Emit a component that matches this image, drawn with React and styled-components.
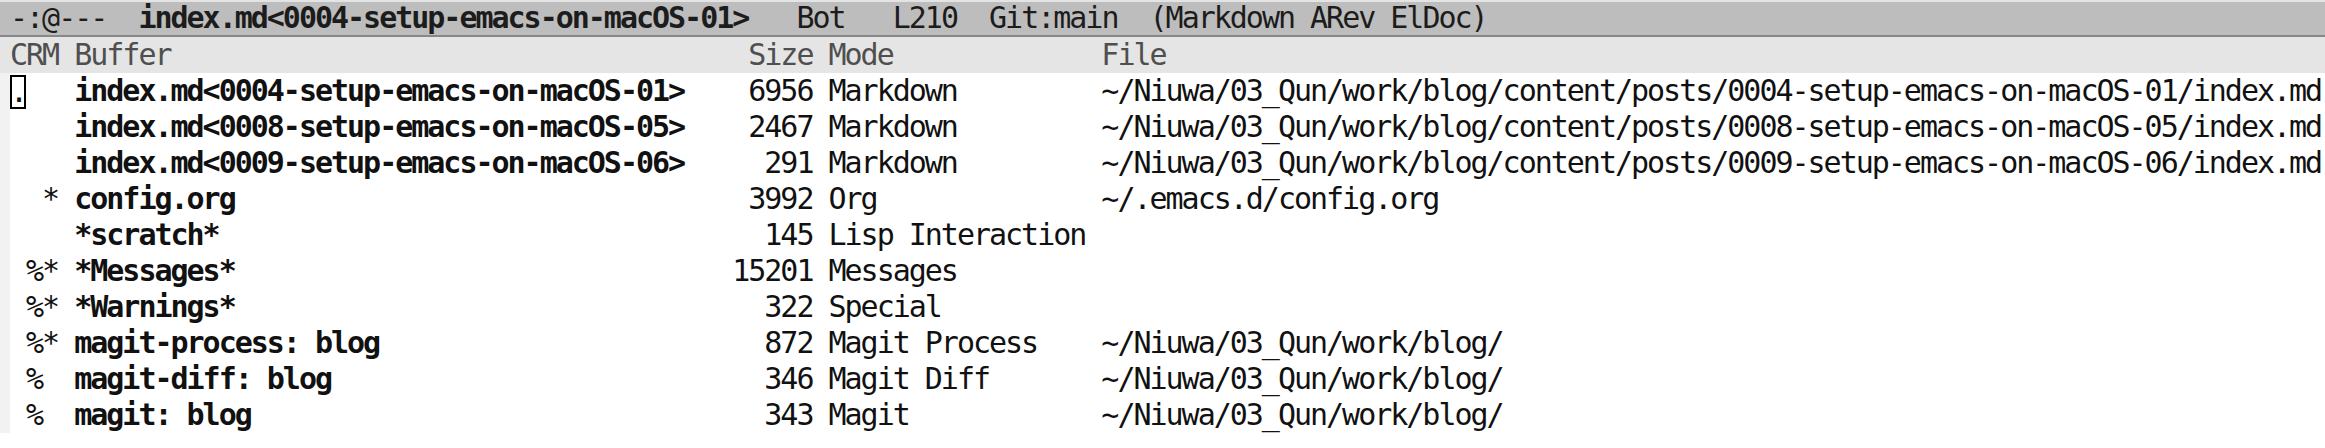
import styled, { createGlobalStyle } from "styled-components"

// one terminal cell, in px (the buffer is a 144 column grid)
const CELL = 16.05
const FONT = 30

const GlobalStyle = createGlobalStyle`
  html, body {
    margin: 0;
    padding: 0;
    background: #ffffff;
  }
  body {
    font-family: "DejaVu Sans Mono", "Liberation Mono", monospace;
  }
`

const rows = [
  {
    current: ".",
    name: "index.md<0004-setup-emacs-on-macOS-01>",
    size: "6956",
    mode: "Markdown",
    file: "~/Niuwa/03_Qun/work/blog/content/posts/0004-setup-emacs-on-macOS-01/index.md",
    cursor: true,
  },
  {
    name: "index.md<0008-setup-emacs-on-macOS-05>",
    size: "2467",
    mode: "Markdown",
    file: "~/Niuwa/03_Qun/work/blog/content/posts/0008-setup-emacs-on-macOS-05/index.md",
  },
  {
    name: "index.md<0009-setup-emacs-on-macOS-06>",
    size: "291",
    mode: "Markdown",
    file: "~/Niuwa/03_Qun/work/blog/content/posts/0009-setup-emacs-on-macOS-06/index.md",
  },
  { modified: "*", name: "config.org", size: "3992", mode: "Org", file: "~/.emacs.d/config.org" },
  { name: "*scratch*", size: "145", mode: "Lisp Interaction" },
  { readOnly: "%", modified: "*", name: "*Messages*", size: "15201", mode: "Messages" },
  { readOnly: "%", modified: "*", name: "*Warnings*", size: "322", mode: "Special" },
  {
    readOnly: "%",
    modified: "*",
    name: "magit-process: blog",
    size: "872",
    mode: "Magit Process",
    file: "~/Niuwa/03_Qun/work/blog/",
  },
  { readOnly: "%", name: "magit-diff: blog", size: "346", mode: "Magit Diff", file: "~/Niuwa/03_Qun/work/blog/" },
  { readOnly: "%", name: "magit: blog", size: "343", mode: "Magit", file: "~/Niuwa/03_Qun/work/blog/" },
]

const App = () => {
  return (
    <>
      <GlobalStyle />
      <Frame>
        <ModeLine>
          <Cell $cols={8}>-:@---</Cell>
          <Cell $cols={41} $bold>index.md&lt;0004-setup-emacs-on-macOS-01&gt;</Cell>
          <Cell $cols={6}>Bot</Cell>
          <Cell $cols={6}>L210</Cell>
          <Cell $cols={10}>Git:main</Cell>
          <Cell $cols={21}>(Markdown ARev ElDoc)</Cell>
        </ModeLine>

        <HeaderLine>
          <Fringe $tone="#e5e5e5" />
          <Row>
            <Cell $cols={4}>CRM</Cell>
            <Cell $cols={38}>Buffer</Cell>
            <Gap />
            <Cell $cols={7} $align="right">Size</Cell>
            <Gap />
            <Cell $cols={16}>Mode</Cell>
            <Gap />
            <Cell $cols={76}>File</Cell>
          </Row>
        </HeaderLine>

        <Body>
          <Fringe $tone="#f2f2f2" />
          <List>
            {rows.map((r) => (
              <Row key={r.name}>
                <Cell $cols={1}>{r.cursor ? <Cursor>{r.current}</Cursor> : " "}</Cell>
                <Cell $cols={1}>{r.readOnly || " "}</Cell>
                <Cell $cols={1}>{r.modified || " "}</Cell>
                <Gap />
                <Cell $cols={38} $bold>{r.name}</Cell>
                <Gap />
                <Cell $cols={7} $align="right">{r.size}</Cell>
                <Gap />
                <Cell $cols={16}>{r.mode}</Cell>
                <Gap />
                <Cell $cols={76}>{r.file || ""}</Cell>
              </Row>
            ))}
          </List>
        </Body>
      </Frame>
    </>
  )
}

const Frame = styled.div`
  width: 2325px;
  height: 448px;
  overflow: hidden;
  background: #ffffff;
  font-size: ${FONT}px;
  letter-spacing: ${CELL - FONT * 0.60205}px;
`

const ModeLine = styled.div`
  display: flex;
  align-items: center;
  box-sizing: border-box;
  height: 37px;
  padding: 0 0 2px 10px;
  background: #bdbdbd;
  border-top: 2px solid #e4e4e4;
  border-bottom: 2px solid #878787;
  color: #1c1c1c;
`

const HeaderLine = styled.div`
  display: flex;
  height: 36px;
  background: #e5e5e5;
  color: #4f4f4f;
`

const Body = styled.div`
  display: flex;
  color: #111111;
`

const Fringe = styled.div`
  flex: 0 0 10px;
  background: ${(p) => p.$tone};
`

const List = styled.div`
  display: flex;
  flex-direction: column;
`

const Row = styled.div`
  display: flex;
  align-items: center;
  height: 36px;
`

const Cell = styled.span`
  flex: 0 0 ${(p) => p.$cols * CELL}px;
  width: ${(p) => p.$cols * CELL}px;
  white-space: pre;
  overflow: visible;
  text-align: ${(p) => p.$align || "left"};
  font-weight: ${(p) => (p.$bold ? 700 : 400)};
  line-height: 36px;
`

const Gap = styled.span`
  flex: 0 0 ${CELL}px;
`

const Cursor = styled.span`
  display: inline-flex;
  align-items: center;
  justify-content: center;
  box-sizing: border-box;
  width: ${CELL}px;
  height: 34px;
  border: 2px solid #000000;
  line-height: 1;
  vertical-align: middle;
`

export default App
